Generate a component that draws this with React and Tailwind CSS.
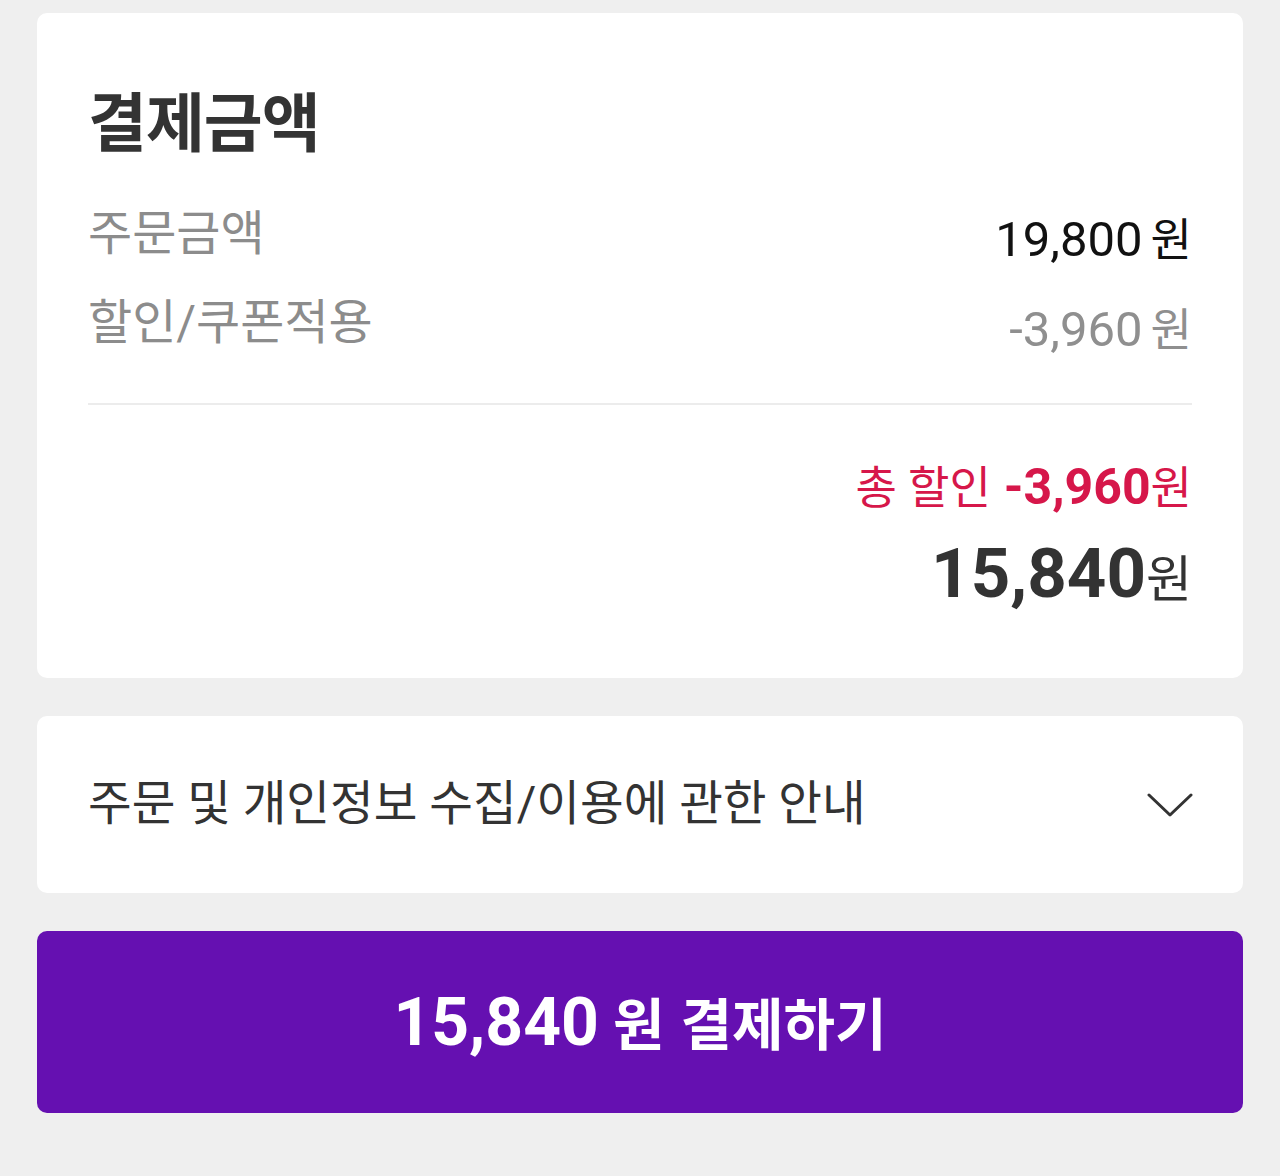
export default function App() {
  const font = { fontFamily: "Roboto, 'Noto Sans CJK KR', sans-serif" };
  return (
    <div
      className="w-[1280px] h-[1176px] bg-[#efefef] px-[37px] pt-[13px] flex flex-col"
      style={font}
    >
      <div className="bg-white rounded-[10px] h-[665px] px-[51px] pt-[77px]">
        <h2 className="text-[64px] leading-[70px] font-bold text-[#333333] tracking-[-1px]">
          결제금액
        </h2>
        <div className="mt-[42px] flex items-center justify-between h-[70px]">
          <span className="text-[48px] text-[#8c8c8c] -mt-[6px]">주문금액</span>
          <span className="text-[#111111] flex items-baseline mt-[5px]">
            <span className="text-[49px]">19,800</span>
            <span className="text-[45px] ml-[8px]">원</span>
          </span>
        </div>
        <div className="flex items-center justify-between h-[70px] mt-[19px]">
          <span className="text-[48px] text-[#8c8c8c] -mt-[6px]">할인/쿠폰적용</span>
          <span className="text-[#8f8f8f] flex items-baseline mt-[8px]">
            <span className="text-[49px]">-3,960</span>
            <span className="text-[45px] ml-[8px]">원</span>
          </span>
        </div>
        <div className="h-[2px] bg-[#ececec] mt-[42px]" />
        <div className="flex flex-col items-end mt-[52px]">
          <div className="flex items-baseline text-[#d6174a] h-[60px] leading-[60px]">
            <span className="text-[45px]">총 할인</span>
            <span className="text-[50px] font-bold ml-[13px]">-3,960</span>
            <span className="text-[45px]">원</span>
          </div>
          <div className="flex items-baseline text-[#333333] mt-[17px] h-[80px] leading-[80px]">
            <span className="text-[69px] font-bold">15,840</span>
            <span className="text-[50px]">원</span>
          </div>
        </div>
      </div>

      <div className="bg-white rounded-[10px] h-[177px] mt-[38px] px-[51px] flex items-center justify-between">
        <span className="text-[47.5px] text-[#333333]">
          주문 및 개인정보 수집/이용에 관한 안내
        </span>
        <svg width="46" height="26" viewBox="0 0 46 26" fill="none" className="mr-[-1px]">
          <path
            d="M2 3 L23 23 L44 3"
            stroke="#333333"
            strokeWidth="3"
            strokeLinecap="round"
            strokeLinejoin="round"
          />
        </svg>
      </div>

      <button className="mt-[38px] h-[182px] rounded-[10px] bg-[#6510b1] text-white flex items-center justify-center">
        <span className="flex items-baseline font-bold">
          <span className="text-[66px]">15,840</span>
          <span className="text-[56px] ml-[14px]">원</span>
          <span className="text-[56px] ml-[16px]">결제하기</span>
        </span>
      </button>
    </div>
  );
}
